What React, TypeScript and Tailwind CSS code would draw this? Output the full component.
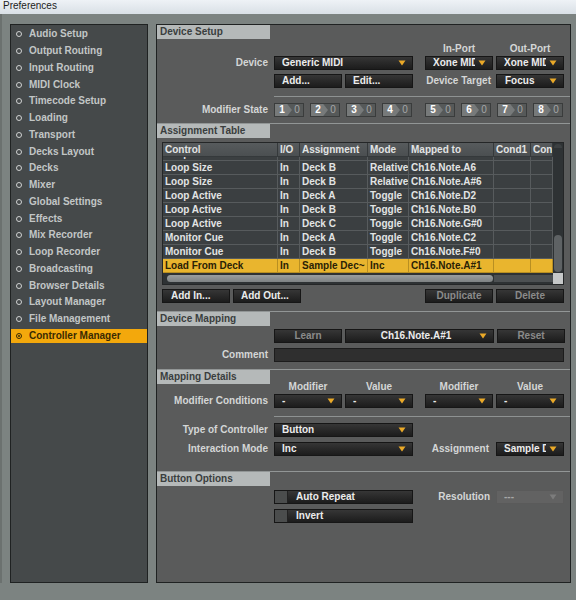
import React from "react";

const NAV = [
  "Audio Setup",
  "Output Routing",
  "Input Routing",
  "MIDI Clock",
  "Timecode Setup",
  "Loading",
  "Transport",
  "Decks Layout",
  "Decks",
  "Mixer",
  "Global Settings",
  "Effects",
  "Mix Recorder",
  "Loop Recorder",
  "Broadcasting",
  "Browser Details",
  "Layout Manager",
  "File Management",
  "Controller Manager",
];

const ROWS = [
  ["Loop Size", "In", "Deck A", "Relative", "Ch16.Note.F6"],
  ["Loop Size", "In", "Deck B", "Relative", "Ch16.Note.A6"],
  ["Loop Size", "In", "Deck B", "Relative", "Ch16.Note.A#6"],
  ["Loop Active", "In", "Deck A", "Toggle", "Ch16.Note.D2"],
  ["Loop Active", "In", "Deck B", "Toggle", "Ch16.Note.B0"],
  ["Loop Active", "In", "Deck C", "Toggle", "Ch16.Note.G#0"],
  ["Monitor Cue", "In", "Deck A", "Toggle", "Ch16.Note.C2"],
  ["Monitor Cue", "In", "Deck B", "Toggle", "Ch16.Note.F#0"],
  ["Load From Deck", "In", "Sample Dec~", "Inc", "Ch16.Note.A#1"],
];

const COLS = "grid grid-cols-[115px_22px_68px_41px_85px_37px_22px]";

function Arrow({ dim }: { dim?: boolean }) {
  return (
    <svg width="8" height="6" viewBox="0 0 8 6" className="shrink-0">
      <path d="M0.5 0.5 H7.5 L4 5.5 Z" fill={dim ? "#7c7c7c" : "#eaa928"} />
    </svg>
  );
}

function Drop({
  text,
  center,
  dim,
  className = "",
}: {
  text: string;
  center?: boolean;
  dim?: boolean;
  className?: string;
}) {
  return (
    <div
      className={`flex h-[14px] items-center gap-[3px] border pl-[7px] pr-[6px] ${
        dim
          ? "border-[#5a5a5a] bg-[#626262] text-[#a8a8a8]"
          : "border-[#161616] bg-linear-to-b from-[#363636] to-[#1c1c1c] text-[#ececec]"
      } ${className}`}
    >
      <span
        className={`min-w-0 flex-1 overflow-hidden whitespace-nowrap leading-[12px] ${
          center ? "text-center" : ""
        }`}
      >
        {text}
      </span>
      <Arrow dim={dim} />
    </div>
  );
}

function Btn({
  text,
  center,
  off,
  className = "",
}: {
  text: string;
  center?: boolean;
  off?: boolean;
  className?: string;
}) {
  return (
    <div
      className={`flex h-[14px] items-center border border-[#161616] bg-linear-to-b from-[#363636] to-[#1c1c1c] leading-[12px] ${
        center ? "justify-center" : "pl-[7px]"
      } ${off ? "text-[#8a8a8a]" : "text-[#ececec]"} ${className}`}
    >
      {text}
    </div>
  );
}

function Label({ text }: { text: string }) {
  return (
    <div className="mr-[6px] w-[111px] shrink-0 whitespace-nowrap text-right leading-[14px] text-[#d4d6d6]">
      {text}
    </div>
  );
}

function ModBox({ n }: { n: number }) {
  return (
    <div className="flex h-[14px] w-[30px] border border-[#3a3c3c] bg-[#565959] leading-[12px]">
      <div className="flex w-[17px] items-center justify-center bg-[#777a7a] pr-[3px] text-white [clip-path:polygon(0_0,72%_0,100%_50%,72%_100%,0_100%)]">
        {n}
      </div>
      <div className="flex flex-1 items-center justify-center pr-[1px] font-normal text-[#a4a7a7]">
        0
      </div>
    </div>
  );
}

function Section({
  title,
  first,
  className = "",
  children,
}: {
  title: string;
  first?: boolean;
  className?: string;
  children: React.ReactNode;
}) {
  return (
    <div className={`${first ? "" : "border-t border-[#929696]"} ${className}`}>
      <div className="h-[14px] w-[113px] bg-[#b5b9b9] pl-[3px] leading-[14px] text-[#3a3e3e]">
        {title}
      </div>
      {children}
    </div>
  );
}

function SubLine() {
  return <div className="ml-[117px] h-px bg-[#8e9292]" />;
}

function Check({ text }: { text: string }) {
  return (
    <div className="flex h-[14px] w-[139px] items-center border border-[#161616] bg-linear-to-b from-[#363636] to-[#1c1c1c] text-[#ececec]">
      <div className="h-[12px] w-[13px] border-r border-[#222] bg-[#4b4d4d]" />
      <span className="ml-[8px] leading-[12px]">{text}</span>
    </div>
  );
}

function Table() {
  return (
    <div className="mx-[5px] mt-[4px] w-[402px] border border-[#242627] bg-[#2c3032]">
      <div className="flex">
        <div className="w-[390px]">
          <div className={`${COLS} h-[14px] bg-linear-to-b from-[#575b5d] to-[#4a4e50] text-[#e2e4e4]`}>
            {["Control", "I/O", "Assignment", "Mode", "Mapped to", "Cond1", "Con"].map((h) => (
              <div
                key={h}
                className="overflow-hidden whitespace-nowrap border-r border-b border-[#35393b] pl-[2px] leading-[13px]"
              >
                {h}
              </div>
            ))}
          </div>
          <div className="h-[116px] overflow-hidden">
            <div className="-mt-[10px]">
              {ROWS.map((r, i) => {
                const sel = i === ROWS.length - 1;
                return (
                  <div
                    key={i}
                    className={`${COLS} h-[14px] ${
                      sel ? "bg-[#e9b52e] text-[#2a2206]" : "bg-[#3b3f41] text-[#e2e4e4]"
                    }`}
                  >
                    {[...r, "", ""].map((c, j) => (
                      <div
                        key={j}
                        className={`overflow-hidden whitespace-nowrap border-r border-b pl-[2px] leading-[13px] ${
                          sel ? "border-[#b88f22]" : "border-[#575b5d]"
                        }`}
                      >
                        {c}
                      </div>
                    ))}
                  </div>
                );
              })}
            </div>
          </div>
        </div>
        <div className="flex w-[10px] flex-col justify-between bg-[#2e3234] px-[1px] py-[1px]">
          <div className="h-[4px] rounded-t-sm bg-[#3c4042]" />
          <div className="h-[37px] rounded-sm bg-[#5e6264]" />
        </div>
      </div>
      <div className="flex h-[11px]">
        <div className="flex w-[390px] items-center bg-[#2e3234] pl-[4px]">
          <div className="h-[7px] w-[326px] rounded-sm bg-linear-to-b from-[#9a9e9f] to-[#7e8283]" />
          <div className="ml-[1px] h-[7px] flex-1 bg-[#4c5052]" />
        </div>
        <div className="w-[10px] bg-[#c6c8c8]" />
      </div>
    </div>
  );
}

export default function App() {
  return (
    <div className="h-[600px] w-[576px] overflow-hidden bg-[#7c8381] font-['Liberation_Sans',Arial,sans-serif] text-[10px] font-bold">
      <div className="h-[14px] bg-linear-to-b from-[#eef2f6] to-[#d9e0e6] pl-[3px] text-[10px] font-normal leading-[12px] text-[#1c1c1c]">
        Preferences
      </div>
      <div className="flex border-l-2 border-[#6b716f] pl-[8px] pt-[10px]">
        {/* sidebar */}
        <div className="h-[559px] w-[138px] border border-[#1f2222] bg-[#45494a] pt-[1px]">
          {NAV.map((n) => {
            const sel = n === "Controller Manager";
            return (
              <div key={n} className="flex h-[16.75px] items-center">
                <div
                  className={`flex h-[14px] w-full items-center pl-[5px] ${
                    sel ? "bg-[#f3a80c] text-[#3a2a02]" : "text-[#c2c6c6]"
                  }`}
                >
                  <span
                    className={`flex h-[6px] w-[6px] items-center justify-center rounded-full border-[1.5px] ${
                      sel ? "border-[#3a2a02]" : "border-[#d0d2d2]"
                    }`}
                  >
                    {sel && <span className="h-[2px] w-[2px] rounded-full bg-[#3a2a02]" />}
                  </span>
                  <span className="ml-[7px] whitespace-nowrap leading-[14px]">{n}</span>
                </div>
              </div>
            );
          })}
        </div>

        {/* main panel */}
        <div className="ml-[8px] flex h-[559px] w-[415px] flex-col border border-[#1f2222] bg-[#5a5b5b]">
          <Section title="Device Setup" first className="pb-[6px]">
            <div className="mt-[2px] flex h-[15px] items-center">
              <div className="ml-[268px] grid w-[139px] grid-cols-2 gap-[3px] text-center text-[#d4d6d6]">
                <span>In-Port</span>
                <span>Out-Port</span>
              </div>
            </div>
            <div className="flex">
              <Label text="Device" />
              <Drop text="Generic MIDI" className="w-[139px]" />
              <div className="ml-[12px] grid w-[139px] grid-cols-2 gap-[3px]">
                <Drop text="Xone MIDI" />
                <Drop text="Xone MIDI" />
              </div>
            </div>
            <div className="mt-[4px] flex">
              <div className="mr-[6px] w-[111px]" />
              <div className="grid w-[139px] grid-cols-2 gap-[3px]">
                <Btn text="Add..." />
                <Btn text="Edit..." />
              </div>
              <div className="ml-[12px] grid w-[139px] grid-cols-2 gap-[3px]">
                <div className="whitespace-nowrap pr-[2px] text-right leading-[14px] text-[#d4d6d6]">
                  Device Target
                </div>
                <Drop text="Focus" className="pl-[8px]" />
              </div>
            </div>
            <div className="mt-[8px]">
              <SubLine />
            </div>
            <div className="mt-[6px] flex">
              <Label text="Modifier State" />
              <div className="flex w-[139px] gap-[6px]">
                {[1, 2, 3, 4].map((n) => (
                  <ModBox key={n} n={n} />
                ))}
              </div>
              <div className="ml-[12px] flex w-[139px] gap-[6px]">
                {[5, 6, 7, 8].map((n) => (
                  <ModBox key={n} n={n} />
                ))}
              </div>
            </div>
          </Section>

          <Section title="Assignment Table" className="pb-[8px]">
            <Table />
            <div className="mt-[4px] flex justify-between pl-[5px] pr-[6px]">
              <div className="flex gap-[3px]">
                <Btn text="Add In..." className="w-[68px] pl-[8px]" />
                <Btn text="Add Out..." className="w-[68px]" />
              </div>
              <div className="flex gap-[3px]">
                <Btn text="Duplicate" center off className="w-[68px]" />
                <Btn text="Delete" center off className="w-[68px]" />
              </div>
            </div>
          </Section>

          <Section title="Device Mapping" className="pb-[7px]">
            <div className="mt-[3px] flex">
              <div className="mr-[6px] w-[111px]" />
              <Btn text="Learn" center off className="w-[68px]" />
              <Drop text="Ch16.Note.A#1" center className="ml-[3px] w-[149px] pl-[10px]" />
              <Btn text="Reset" center off className="ml-[3px] w-[68px]" />
            </div>
            <div className="mt-[5px] flex">
              <Label text="Comment" />
              <div className="h-[14px] w-[290px] border border-[#1c1c1c] bg-[#2f2f2f]" />
            </div>
          </Section>

          <Section title="Mapping Details" className="pb-[15px]">
            <div className="-mt-[5px] flex h-[14px] items-center text-[#d4d6d6]">
              <div className="ml-[117px] grid w-[139px] grid-cols-2 gap-[3px] text-center">
                <span>Modifier</span>
                <span>Value</span>
              </div>
              <div className="ml-[12px] grid w-[139px] grid-cols-2 gap-[3px] text-center">
                <span>Modifier</span>
                <span>Value</span>
              </div>
            </div>
            <div className="mt-[1px] flex">
              <Label text="Modifier Conditions" />
              <div className="grid w-[139px] grid-cols-2 gap-[3px]">
                <Drop text="-" />
                <Drop text="-" />
              </div>
              <div className="ml-[12px] grid w-[139px] grid-cols-2 gap-[3px]">
                <Drop text="-" />
                <Drop text="-" />
              </div>
            </div>
            <div className="mt-[8px]">
              <SubLine />
            </div>
            <div className="mt-[6px] flex">
              <Label text="Type of Controller" />
              <Drop text="Button" className="w-[139px]" />
            </div>
            <div className="mt-[5px] flex">
              <Label text="Interaction Mode" />
              <Drop text="Inc" className="w-[139px]" />
              <div className="ml-[12px] grid w-[139px] grid-cols-2 gap-[3px]">
                <div className="whitespace-nowrap pr-[4px] text-right leading-[14px] text-[#d4d6d6]">
                  Assignment
                </div>
                <Drop text="Sample Deck" />
              </div>
            </div>
          </Section>

          <Section title="Button Options" className="flex-1">
            <div className="mt-[4px] flex">
              <div className="mr-[6px] w-[111px]" />
              <Check text="Auto Repeat" />
              <div className="ml-[12px] grid w-[139px] grid-cols-2 gap-[3px]">
                <div className="whitespace-nowrap pr-[3px] text-right leading-[14px] text-[#d4d6d6]">
                  Resolution
                </div>
                <Drop text="---" dim />
              </div>
            </div>
            <div className="mt-[5px] flex">
              <div className="mr-[6px] w-[111px]" />
              <Check text="Invert" />
            </div>
          </Section>
        </div>
      </div>
    </div>
  );
}
